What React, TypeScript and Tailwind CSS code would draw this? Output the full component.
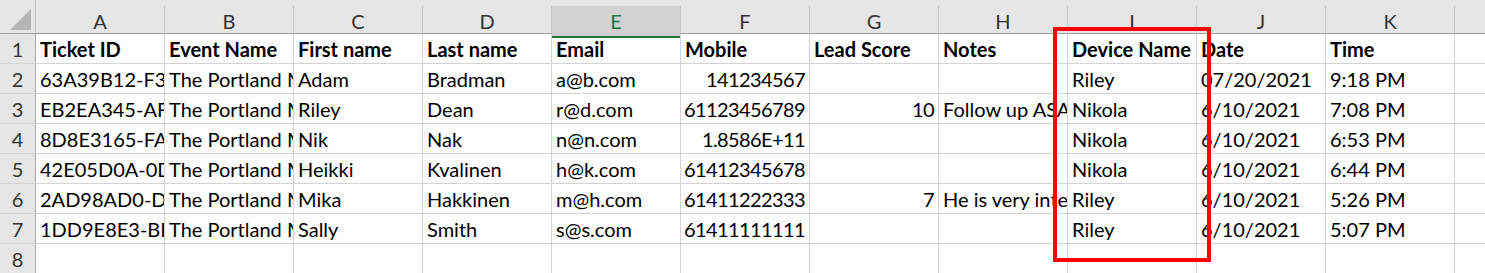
const cols = ["A", "B", "C", "D", "E", "F", "G", "H", "I", "J", "K"];

type Cell = { v: string; bold?: boolean; right?: boolean };

const header: Cell[] = [
  { v: "Ticket ID", bold: true },
  { v: "Event Name", bold: true },
  { v: "First name", bold: true },
  { v: "Last name", bold: true },
  { v: "Email", bold: true },
  { v: "Mobile", bold: true },
  { v: "Lead Score", bold: true },
  { v: "Notes", bold: true },
  { v: "Device Name", bold: true },
  { v: "Date", bold: true },
  { v: "Time", bold: true },
];

const data: string[][] = [
  ["63A39B12-F3A4", "The Portland Marathon", "Adam", "Bradman", "a@b.com", "141234567", "", "", "Riley", "07/20/2021", "9:18 PM"],
  ["EB2EA345-AF5C", "The Portland Marathon", "Riley", "Dean", "r@d.com", "61123456789", "10", "Follow up ASAP", "Nikola", "6/10/2021", "7:08 PM"],
  ["8D8E3165-FA1B", "The Portland Marathon", "Nik", "Nak", "n@n.com", "1.8586E+11", "", "", "Nikola", "6/10/2021", "6:53 PM"],
  ["42E05D0A-0D1E", "The Portland Marathon", "Heikki", "Kvalinen", "h@k.com", "61412345678", "", "", "Nikola", "6/10/2021", "6:44 PM"],
  ["2AD98AD0-D8F1", "The Portland Marathon", "Mika", "Hakkinen", "m@h.com", "61411222333", "7", "He is very interested", "Riley", "6/10/2021", "5:26 PM"],
  ["1DD9E8E3-BB21", "The Portland Marathon", "Sally", "Smith", "s@s.com", "61411111111", "", "", "Riley", "6/10/2021", "5:07 PM"],
];

const rows: Cell[][] = [
  header,
  ...data.map((r) => r.map((v, i) => ({ v, right: i === 5 || i === 6 }))),
  cols.map(() => ({ v: "" })),
];

function Sheet() {
  return (
    <div className="relative w-[1485px] h-[273px] overflow-hidden bg-white text-black font-['Lato',sans-serif]">
      {/* column letters */}
      <div className="flex h-[34px] bg-[#e6e6e6] border-b border-[#9e9e9e]">
        <div className="w-[36px] shrink-0 flex items-end justify-end pr-[3px] pb-[1px] border-r border-[#bdbdbd]">
          <svg width="22" height="22" viewBox="0 0 22 22" className="mb-[1px]">
            <polygon points="21,0 21,21 0,21" fill="#b4b4b4" />
          </svg>
        </div>
        {cols.map((c) => (
          <div key={c} className="w-[129px] shrink-0 pt-[6px] flex flex-col">
            <div
              className={
                c === "E"
                  ? "flex-1 flex items-center justify-center bg-[#d2d2d2] border-r border-[#c6c6c6] border-b-2 border-b-[#217346] text-[#217346] text-[20px]"
                  : "flex-1 flex items-center justify-center border-r border-[#c6c6c6] text-[#333] text-[20px]"
              }
            >
              {c}
            </div>
          </div>
        ))}
        <div className="flex-1" />
      </div>

      {rows.map((row, ri) => (
        <div key={ri} className="flex h-[30px]">
          <div className="w-[36px] shrink-0 bg-[#e6e6e6] border-r border-[#ababab] border-b border-b-[#d4d4d4] flex items-center justify-center text-[20px] text-[#333]">
            {ri + 1}
          </div>
          {row.map((cell, ci) => (
            <div
              key={ci}
              className={`w-[129px] shrink-0 border-r border-b border-[#d4d4d4] overflow-hidden whitespace-nowrap flex items-center text-[20px] ${
                cell.right ? "justify-end pr-[4px] tracking-[-0.6px]" : "pl-[4px]"
              } ${cell.bold ? "font-bold" : ""}`}
            >
              {cell.v}
            </div>
          ))}
          <div className="flex-1 border-b border-[#d4d4d4]" />
        </div>
      ))}

      {/* highlight box drawn over the sheet */}
      <div className="absolute left-[1053px] top-[27px] w-[158px] h-[235px] border-4 border-[#ff0000] pointer-events-none" />
    </div>
  );
}

export default function App() {
  return <Sheet />;
}
